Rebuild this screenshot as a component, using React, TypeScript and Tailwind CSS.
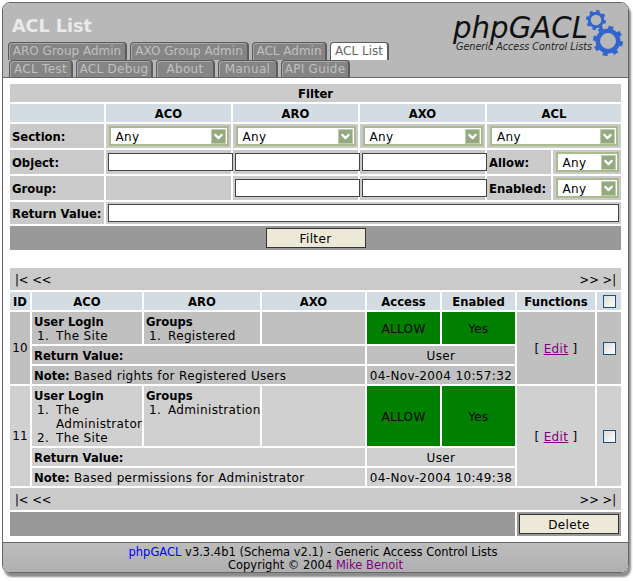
import { Fragment } from 'react';
import { ChevronDown } from 'lucide-react';

const font = { fontFamily: '"DejaVu Sans", Verdana, sans-serif' };

const tabRows = [
  [
    { label: 'ARO Group Admin', w: 'w-[119px]' },
    { label: 'AXO Group Admin', w: 'w-[119px]' },
    { label: 'ACL Admin', w: 'w-[75px]' },
    { label: 'ACL List', w: 'w-[59px]' },
  ],
  [
    { label: 'ACL Test', w: 'w-[64px]' },
    { label: 'ACL Debug', w: 'w-[77px]' },
    { label: 'About', w: 'w-[59px]' },
    { label: 'Manual', w: 'w-[60px]' },
    { label: 'API Guide', w: 'w-[69px]' },
  ],
];

function Tab({ label, w }: { label: string; w: string }) {
  const active = label === 'ACL List';
  return (
    <div
      className={`${w} h-[18px] text-center leading-[17px] whitespace-pre border border-b-0 border-r-2 border-[#5c5c5c] rounded-t-[4px] ${
        active ? 'bg-white text-[#666]' : 'bg-[#858585] text-[#c0c0c0] shadow-[inset_1px_1px_0_#a8a8a8]'
      }`}
    >
      {label}
    </div>
  );
}

function Select({ width }: { width: string }) {
  return (
    <div className={`${width} h-[20px] mx-auto border-2 border-[#a9bb8a] bg-white flex items-center justify-between pl-[5px] pr-[1px]`}>
      <span className="pt-[2px]">Any</span>
      <span className="w-[15px] h-[15px] bg-[#95a980] border border-[#c0cdb0] flex items-center justify-center">
        <ChevronDown size={13} strokeWidth={4} className="text-white" />
      </span>
    </div>
  );
}

function TextBox({ width }: { width: string }) {
  return <input className={`${width} h-[18px] block border-[1.5px] border-[#444] bg-white`} />;
}

function CheckBox() {
  return <div className="w-[13px] h-[13px] mx-auto border border-[#1c5180] bg-gradient-to-br from-[#dcdcd7] to-white" />;
}

function Gear({ cx, cy, r }: { cx: number; cy: number; r: number }) {
  const teeth = [0, 45, 90, 135, 180, 225, 270, 315];
  return (
    <g>
      <circle cx={cx} cy={cy} r={r * 0.68} fill="none" stroke="#3366cc" strokeWidth={r * 0.3} />
      {teeth.map(a => (
        <rect
          key={a}
          x={cx - r * 0.17}
          y={cy - r}
          width={r * 0.34}
          height={r * 0.4}
          fill="#3366cc"
          transform={`rotate(${a + 12} ${cx} ${cy})`}
        />
      ))}
    </g>
  );
}

function Logo() {
  return (
    <svg width="181" height="70" viewBox="0 0 181 70" className="shrink-0">
      <text
        x="6"
        y="35"
        fontFamily="DejaVu Sans"
        fontStyle="italic"
        fontSize="31"
        textLength="135"
        lengthAdjust="spacingAndGlyphs"
        fill="#111"
      >
        phpGACL
      </text>
      <text
        x="9"
        y="47"
        fontFamily="DejaVu Sans"
        fontStyle="italic"
        fontSize="10"
        textLength="136"
        lengthAdjust="spacingAndGlyphs"
        fill="#222"
      >
        Generic Access Control Lists
      </text>
      <Gear cx={149} cy={17} r={10} />
      <Gear cx={161} cy={38} r={15} />
    </svg>
  );
}

const nav = (
  <tr>
    <td colSpan={8} className="bg-[#cacaca] h-[22px] px-[5px]">
      <div className="flex justify-between text-[11.5px] tracking-normal leading-[14px] pt-[2px]">
        <span>|&lt; &lt;&lt;</span>
        <span>&gt;&gt; &gt;|</span>
      </div>
    </td>
  </tr>
);

const headers = ['ID', 'ACO', 'ARO', 'AXO', 'Access', 'Enabled', 'Functions'];

const acls = [
  {
    id: 10,
    bg: 'bg-[#c0c0c0]',
    aco: ['The Site'],
    aro: ['Registered'],
    note: 'Based rights for Registered Users',
    date: '04-Nov-2004 10:57:32',
    h: 'h-[32px]',
  },
  {
    id: 11,
    bg: 'bg-[#d0d0d0]',
    aco: ['The Administrator', 'The Site'],
    aro: ['Administration'],
    note: 'Based permissions for Administrator',
    date: '04-Nov-2004 10:49:38',
    h: 'h-[60px]',
  },
];

function List({ title, items }: { title: string; items: string[] }) {
  return (
    <>
      <b className="text-[11.6px] tracking-normal">{title}</b>
      <ol>
        {items.map((item, i) => (
          <li key={item} className="flex">
            <span className="w-[22px] shrink-0 pl-[3px]">{i + 1}.</span>
            <span>{item}</span>
          </li>
        ))}
      </ol>
    </>
  );
}

const label = 'font-bold text-[11.6px] tracking-normal pl-[2px] pt-[2px] whitespace-nowrap';
const heading = 'font-bold text-[11.6px] tracking-normal pt-[2px]';
const button = 'block mx-auto w-[100px] h-[20px] pt-[2px] bg-[#ece9d8] border border-[#333] leading-[14px]';

export default function App() {
  return (
    <div className="w-[633px] h-[581px] bg-white pt-[2px] pl-[2px] text-[12px] leading-[14px] text-black overflow-hidden" style={font}>
      <div className="w-[627px] h-[571px] border border-[#666] rounded-[8px] flex flex-col overflow-hidden shadow-[2px_4px_2px_rgba(0,0,0,0.45)]">
        <div className="h-[75px] shrink-0 bg-[#b8b8b8] border-b border-[#666] flex justify-between pl-[5px]">
          <div className="flex flex-col">
            <div className="text-[17.6px] leading-[22px] font-bold text-[#eaeaea] pl-[4px] pt-[12px] h-[39px]">ACL List</div>
            {tabRows.map((row, i) => (
              <div key={i} className={`flex gap-[3px] ${i === 1 ? 'h-[17px] overflow-hidden ml-[1px] tracking-[0.3px]' : ''}`}>
                {row.map(tab => (
                  <Tab key={tab.label} label={tab.label} w={tab.w} />
                ))}
              </div>
            ))}
          </div>
          <Logo />
        </div>

        <div className="flex-1 bg-white pt-[4px] pl-[5px] tracking-[0.35px]">
          <table className="table-fixed border-separate border-spacing-[2px] w-[615px]">
            <colgroup>
              <col className="w-[94px]" />
              <col className="w-[125px]" />
              <col className="w-[125px]" />
              <col className="w-[125px]" />
              <col className="w-[64px]" />
              <col className="w-[68px]" />
            </colgroup>
            <tbody>
              <tr>
                <th colSpan={6} className={`bg-[#cacaca] h-[18px] ${heading}`}>Filter</th>
              </tr>
              <tr className="bg-[#d3dce3] h-[18px]">
                <td />
                <th className={heading}>ACO</th>
                <th className={heading}>ARO</th>
                <th className={heading}>AXO</th>
                <th colSpan={2} className={heading}>ACL</th>
              </tr>
              <tr className="bg-[#cacaca] h-[24px]">
                <td className={label}>Section:</td>
                <td><Select width="w-[120px]" /></td>
                <td><Select width="w-[120px]" /></td>
                <td><Select width="w-[120px]" /></td>
                <td colSpan={2}><Select width="w-[128px]" /></td>
              </tr>
              <tr className="bg-[#cacaca] h-[24px]">
                <td className={label}>Object:</td>
                <td className="pl-[2px]"><TextBox width="w-[125px]" /></td>
                <td className="pl-[2px]"><TextBox width="w-[125px]" /></td>
                <td className="pl-[2px]"><TextBox width="w-[125px]" /></td>
                <td className={label}>Allow:</td>
                <td><Select width="w-[63px]" /></td>
              </tr>
              <tr className="bg-[#cacaca] h-[24px]">
                <td className={label}>Group:</td>
                <td />
                <td className="pl-[2px]"><TextBox width="w-[125px]" /></td>
                <td className="pl-[2px]"><TextBox width="w-[125px]" /></td>
                <td className={label}>Enabled:</td>
                <td><Select width="w-[63px]" /></td>
              </tr>
              <tr className="bg-[#cacaca] h-[22px]">
                <td className={label}>Return Value:</td>
                <td colSpan={5} className="pl-[2px]"><TextBox width="w-[511px]" /></td>
              </tr>
              <tr className="bg-[#999] h-[24px]">
                <td colSpan={6}>
                  <button className={button}>Filter</button>
                </td>
              </tr>
            </tbody>
          </table>

          <table className="table-fixed border-separate border-spacing-[2px] w-[615px] mt-[14px]">
            <colgroup>
              <col className="w-[20px]" />
              <col className="w-[110px]" />
              <col className="w-[116px]" />
              <col className="w-[103px]" />
              <col className="w-[73px]" />
              <col className="w-[73px]" />
              <col className="w-[78px]" />
              <col className="w-[24px]" />
            </colgroup>
            <tbody>
              {nav}
              <tr className="bg-[#d3dce3] h-[18px]">
                {headers.map(h => (
                  <th key={h} className={heading}>{h}</th>
                ))}
                <td><CheckBox /></td>
              </tr>
              {acls.map(acl => (
                <Fragment key={acl.id}>
                  <tr className={acl.bg}>
                    <td rowSpan={3} className="text-center tracking-normal">{acl.id}</td>
                    <td className={`${acl.h} px-[2px] align-top pt-[3px]`}><List title="User Login" items={acl.aco} /></td>
                    <td className="px-[2px] align-top pt-[3px]"><List title="Groups" items={acl.aro} /></td>
                    <td />
                    <td className="bg-[#008000] text-center pt-[2px]">ALLOW</td>
                    <td className="bg-[#008000] text-center pt-[2px]">Yes</td>
                    <td rowSpan={3} className="text-center pt-[2px]">
                      [ <a href="#" className="underline text-[#800080]">Edit</a> ]
                    </td>
                    <td rowSpan={3}><CheckBox /></td>
                  </tr>
                  <tr className={`${acl.bg} h-[18px]`}>
                    <td colSpan={3} className={label}>Return Value:</td>
                    <td colSpan={2} className="text-center pt-[2px]">User</td>
                  </tr>
                  <tr className={`${acl.bg} h-[18px]`}>
                    <td colSpan={3} className="px-[2px] pt-[2px]"><b className="text-[11.6px] tracking-normal">Note:</b> {acl.note}</td>
                    <td colSpan={2} className="text-center pt-[2px]">{acl.date}</td>
                  </tr>
                </Fragment>
              ))}
              {nav}
              <tr className="bg-[#999] h-[24px]">
                <td colSpan={6} />
                <td colSpan={2}>
                  <button className={button}>Delete</button>
                </td>
              </tr>
            </tbody>
          </table>
        </div>

        <div className="h-[30px] shrink-0 bg-gradient-to-b from-[#bcbcbc] to-[#b0b0b0] border-t border-[#666] text-center text-[11.5px] leading-[13px] pt-[3px]">
          <div className="pr-[5px]"><a className="text-[#0000ff]">phpGACL</a> v3.3.4b1 (Schema v2.1) - Generic Access Control Lists</div>
          <div>Copyright © 2004 <a className="text-[#800080]">Mike Benoit</a></div>
        </div>
      </div>
    </div>
  );
}
